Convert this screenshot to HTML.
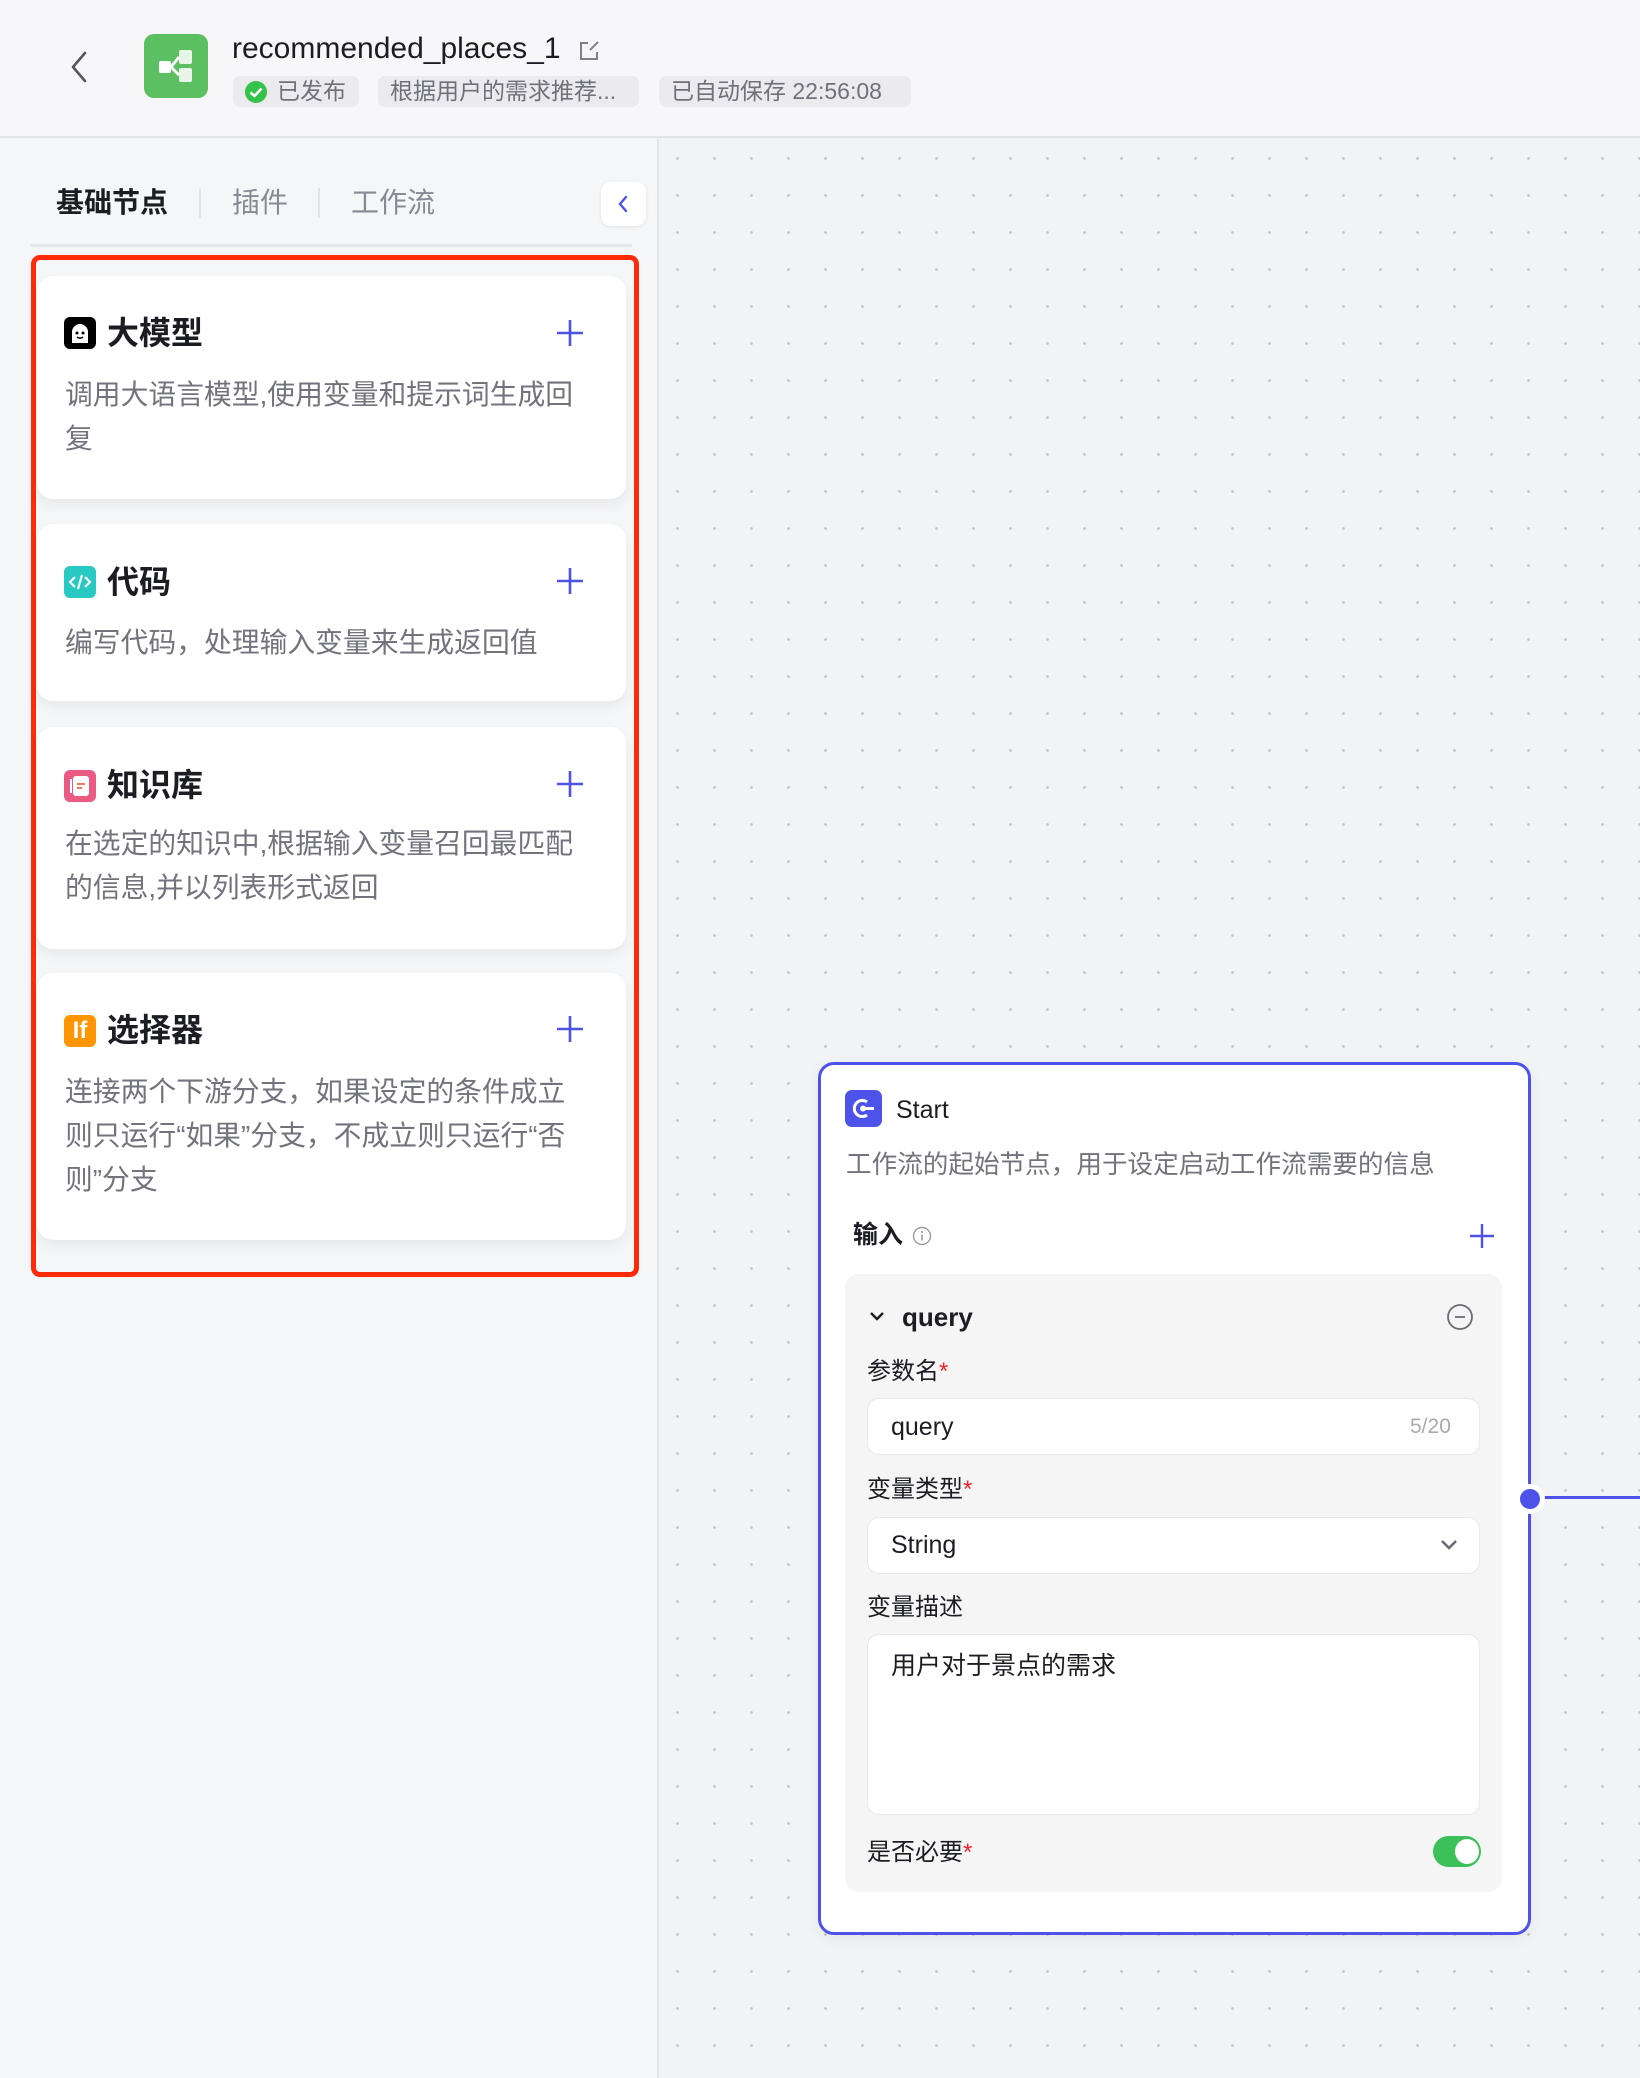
<!DOCTYPE html>
<html><head><meta charset="utf-8">
<style>
*{box-sizing:border-box;margin:0;padding:0}
body{width:1640px;height:2078px;overflow:hidden;background:#f2f3f5;font-family:"Liberation Sans","Noto Sans CJK SC",sans-serif;position:relative;color:#1c1d23}
.abs{position:absolute}
.header{left:0;top:0;width:1640px;height:138px;background:#f7f7f9;border-bottom:2px solid #e3e4e8}
.badge{position:absolute;top:76px;height:31px;background:#ebebef;border-radius:7px;color:#6f7079;font-size:23px;line-height:31px;padding:0 12px;white-space:nowrap}
.left{left:0;top:139px;width:659px;height:1939px;background:#f5f6f8;border-right:2px solid #e3e4e8}
.canvas{left:661px;top:139px;width:979px;height:1939px;background-color:#f2f3f5;background-image:radial-gradient(circle,#c3c5cc 1.2px,transparent 1.6px);background-size:37px 37px;background-position:-2px 1px}
.tab{position:absolute;top:185px;font-size:28px;line-height:36px;color:#888a93}
.card{position:absolute;left:37px;width:589px;background:#fff;border-radius:16px;box-shadow:0 6px 12px rgba(0,0,0,.06)}
.card .ic{position:absolute;left:27px;width:32px;height:32px;border-radius:6px}
.card .t{position:absolute;left:70px;font-size:32px;font-weight:bold;line-height:40px;color:#1c1d23}
.card .p{position:absolute;left:519px;width:28px;height:28px}
.card .d{position:absolute;left:28px;width:560px;font-size:27.8px;line-height:44px;color:#72737c;white-space:nowrap}
.lbl{position:absolute;left:867px;font-size:24px;line-height:34px;color:#1c1d23}
.req{color:#f5222d}
.field{position:absolute;left:867px;width:613px;background:#fff;border:1.5px solid #e8e8ec;border-radius:12px}
</style></head><body>
<div class="abs header"></div>
<svg class="abs" style="left:68px;top:50px" width="22" height="34" viewBox="0 0 22 34"><path d="M17 3 L5 17 L17 31" fill="none" stroke="#55565e" stroke-width="2.6" stroke-linecap="round" stroke-linejoin="round"/></svg>
<div class="abs" style="left:144px;top:34px;width:64px;height:64px;border-radius:10px;background:#5cbf61"></div>
<svg class="abs" style="left:144px;top:34px" width="64" height="64" viewBox="0 0 64 64"><rect x="15" y="27" width="12" height="12" rx="2" fill="#fff"/><rect x="35" y="16" width="13" height="14" rx="2" fill="#e8f5e6"/><rect x="35" y="34" width="13" height="14" rx="2" fill="#e8f5e6"/><path d="M27 33 L35 23 M27 33 L35 41" stroke="#fff" stroke-width="3"/></svg>
<div class="abs" style="left:232px;top:29px;font-size:30px;line-height:40px;color:#1c1d23">recommended_places_1</div>
<svg class="abs" style="left:577px;top:39px" width="24" height="24" viewBox="0 0 24 24"><path d="M11 4 H4 V20 H20 V13" fill="none" stroke="#80818a" stroke-width="2"/><path d="M13 11 L21 3" stroke="#80818a" stroke-width="2"/></svg>
<div class="badge" style="left:233px;width:126px;padding-left:44px">已发布</div>
<svg class="abs" style="left:244px;top:80px" width="24" height="24" viewBox="0 0 24 24"><circle cx="12" cy="12" r="11" fill="#34c24a"/><path d="M6.5 12.5 L10.5 16 L17.5 8.5" fill="none" stroke="#fff" stroke-width="2.6"/></svg>
<div class="badge" style="left:378px;width:261px">根据用户的需求推荐...</div>
<div class="badge" style="left:659px;width:252px">已自动保存 22:56:08</div>

<div class="abs left"></div>
<div class="abs canvas"></div>

<div class="tab" style="left:56px;color:#1c1d23;font-weight:bold">基础节点</div>
<div class="abs" style="left:199px;top:188px;width:2px;height:30px;background:#e2e3e7"></div>
<div class="tab" style="left:232px">插件</div>
<div class="abs" style="left:318px;top:188px;width:2px;height:30px;background:#e2e3e7"></div>
<div class="tab" style="left:351px">工作流</div>
<div class="abs" style="left:601px;top:182px;width:45px;height:44px;background:#fff;border-radius:10px;box-shadow:0 1px 4px rgba(0,0,0,.08)"></div>
<svg class="abs" style="left:615px;top:194px" width="16" height="20" viewBox="0 0 16 20"><path d="M11 3 L5 10 L11 17" fill="none" stroke="#4d53e8" stroke-width="2.4" stroke-linecap="round"/></svg>
<div class="abs" style="left:30px;top:244px;width:602px;height:3px;background:#e6e7eb"></div>

<div class="abs" style="left:31px;top:255px;width:608px;height:1022px;border:5px solid #ff2a0a;border-radius:9px"></div>

<div class="card" style="top:276px;height:223px">
 <svg class="ic" style="top:41px;background:#000" viewBox="0 0 32 32"><path d="M8 26 V15 a8 8 0 0 1 16 0 V26 Z" fill="#fff"/><circle cx="13" cy="16" r="1.5" fill="#000"/><circle cx="19" cy="16" r="1.5" fill="#000"/><path d="M13 20 q3 2.5 6 0" stroke="#000" stroke-width="1.5" fill="none"/></svg>
 <div class="t" style="top:37px">大模型</div>
 <svg class="p" style="top:43px" viewBox="0 0 28 28"><path d="M14 1 V27 M1 14 H27" stroke="#4d53e8" stroke-width="2.6"/></svg>
 <div class="d" style="top:97px">调用大语言模型,使用变量和提示词生成回<br>复</div>
</div>
<div class="card" style="top:524px;height:177px">
 <svg class="ic" style="top:42px;background:#27c9c2" viewBox="0 0 32 32"><path d="M11 11 L6 16 L11 21 M21 11 L26 16 L21 21 M18 9 L14 23" fill="none" stroke="#fff" stroke-width="2.2"/></svg>
 <div class="t" style="top:38px">代码</div>
 <svg class="p" style="top:43px" viewBox="0 0 28 28"><path d="M14 1 V27 M1 14 H27" stroke="#4d53e8" stroke-width="2.6"/></svg>
 <div class="d" style="top:97px">编写代码，处理输入变量来生成返回值</div>
</div>
<div class="card" style="top:727px;height:222px">
 <svg class="ic" style="top:43px;background:#ea5a83" viewBox="0 0 32 32"><rect x="9" y="6" width="16" height="20" rx="3" fill="#fff"/><rect x="6" y="9" width="2" height="14" fill="#fff"/><path d="M13 14 H21 M13 18 H18" stroke="#f07a5a" stroke-width="2"/></svg>
 <div class="t" style="top:38px">知识库</div>
 <svg class="p" style="top:43px" viewBox="0 0 28 28"><path d="M14 1 V27 M1 14 H27" stroke="#4d53e8" stroke-width="2.6"/></svg>
 <div class="d" style="top:95px">在选定的知识中,根据输入变量召回最匹配<br>的信息,并以列表形式返回</div>
</div>
<div class="card" style="top:973px;height:267px">
 <div class="ic" style="top:42px;background:#ff9500;color:#fff;font-weight:bold;font-size:24px;line-height:32px;text-align:center">If</div>
 <div class="t" style="top:37px">选择器</div>
 <svg class="p" style="top:42px" viewBox="0 0 28 28"><path d="M14 1 V27 M1 14 H27" stroke="#4d53e8" stroke-width="2.6"/></svg>
 <div class="d" style="top:97px">连接两个下游分支，如果设定的条件成立<br>则只运行“如果”分支，不成立则只运行“否<br>则”分支</div>
</div>

<!-- Start node -->
<div class="abs" style="left:1538px;top:1496px;width:102px;height:3px;background:#4d53e8"></div>
<div class="abs" style="left:818px;top:1062px;width:713px;height:873px;background:#fff;border:3.5px solid #4d53e8;border-radius:16px;box-shadow:0 4px 14px rgba(0,0,0,.06)"></div>
<div class="abs" style="left:1515px;top:1484px;width:30px;height:30px;border-radius:50%;background:#4d53e8;border:5px solid #fff"></div>
<svg class="abs" style="left:845px;top:1090px" width="37" height="37" viewBox="0 0 37 37"><rect width="37" height="37" rx="7" fill="#4d53e8"/><path d="M22 12 A8 8 0 1 0 22 25" fill="none" stroke="#fff" stroke-width="3"/><circle cx="18" cy="18.5" r="3" fill="#fff"/><path d="M18 18.5 H29" stroke="#fff" stroke-width="3"/></svg>
<div class="abs" style="left:896px;top:1093px;font-size:25px;line-height:34px">Start</div>
<div class="abs" style="left:846px;top:1148px;font-size:25.6px;line-height:34px;color:#72737c;white-space:nowrap">工作流的起始节点，用于设定启动工作流需要的信息</div>
<div class="abs" style="left:853px;top:1218px;font-size:25px;line-height:34px;font-weight:bold">输入</div>
<svg class="abs" style="left:912px;top:1226px" width="20" height="20" viewBox="0 0 20 20"><circle cx="10" cy="10" r="8.5" fill="none" stroke="#9a9ba3" stroke-width="1.4"/><path d="M10 8.5 V14.5" stroke="#9a9ba3" stroke-width="1.6"/><circle cx="10" cy="6" r="1" fill="#9a9ba3"/></svg>
<svg class="abs" style="left:1468px;top:1222px" width="28" height="28" viewBox="0 0 28 28"><path d="M14 2 V26 M2 14 H26" stroke="#4d53e8" stroke-width="2.4"/></svg>

<div class="abs" style="left:845px;top:1274px;width:657px;height:618px;background:#f5f5f6;border-radius:14px"></div>
<svg class="abs" style="left:867px;top:1308px" width="20" height="16" viewBox="0 0 20 16"><path d="M4 5 L10 11 L16 5" fill="none" stroke="#1c1d23" stroke-width="2.4"/></svg>
<div class="abs" style="left:902px;top:1299px;font-size:26px;line-height:36px;font-weight:bold">query</div>
<svg class="abs" style="left:1445px;top:1302px" width="30" height="30" viewBox="0 0 30 30"><circle cx="15" cy="15" r="12" fill="none" stroke="#6a6b73" stroke-width="1.8"/><path d="M10 15 H20" stroke="#6a6b73" stroke-width="1.8"/></svg>

<div class="lbl" style="top:1355px">参数名<span class="req">*</span></div>
<div class="field" style="top:1398px;height:57px"></div>
<div class="abs" style="left:891px;top:1410px;font-size:25px;line-height:34px">query</div>
<div class="abs" style="left:1410px;top:1412px;font-size:21px;line-height:30px;color:#a9aab1">5/20</div>

<div class="lbl" style="top:1473px">变量类型<span class="req">*</span></div>
<div class="field" style="top:1517px;height:57px"></div>
<div class="abs" style="left:891px;top:1528px;font-size:25px;line-height:34px">String</div>
<svg class="abs" style="left:1437px;top:1536px" width="24" height="18" viewBox="0 0 24 18"><path d="M5 5 L12 12 L19 5" fill="none" stroke="#6a6b73" stroke-width="2.6"/></svg>

<div class="lbl" style="top:1591px">变量描述</div>
<div class="field" style="top:1634px;height:181px"></div>
<div class="abs" style="left:891px;top:1649px;font-size:25px;line-height:34px">用户对于景点的需求</div>

<div class="lbl" style="top:1836px">是否必要<span class="req">*</span></div>
<div class="abs" style="left:1433px;top:1836px;width:48px;height:31px;border-radius:16px;background:#3cc15a"></div>
<div class="abs" style="left:1455px;top:1839px;width:24px;height:25px;border-radius:50%;background:#fff"></div>
</body></html>
